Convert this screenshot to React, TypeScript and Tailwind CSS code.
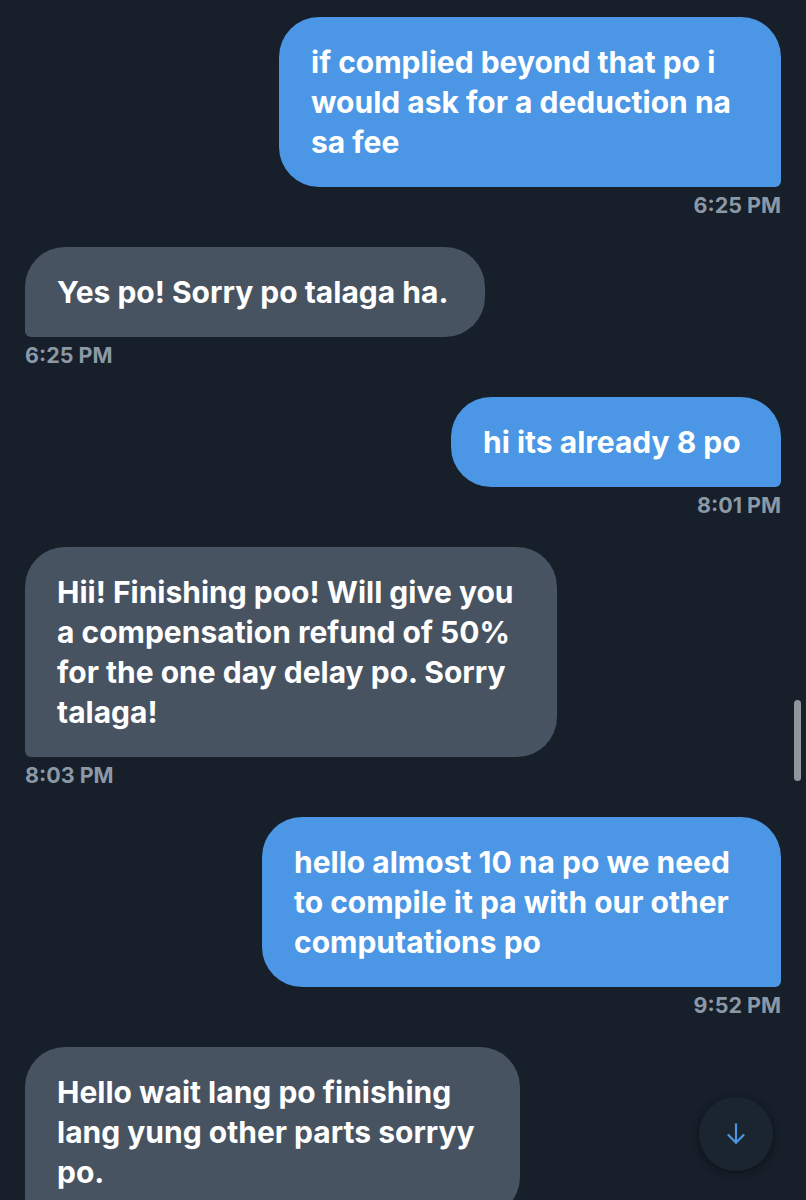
import React from "react";

type Msg = {
  mine: boolean;
  lines: string[];
  width: string;
  time?: string;
};

const messages: Msg[] = [
  {
    mine: true,
    lines: ["if complied beyond that po i", "would ask for a deduction na", "sa fee"],
    width: "w-[502px]",
    time: "6:25 PM",
  },
  { mine: false, lines: ["Yes po! Sorry po talaga ha."], width: "w-[460px]", time: "6:25 PM" },
  { mine: true, lines: ["hi its already 8 po"], width: "w-[330px]", time: "8:01 PM" },
  {
    mine: false,
    lines: [
      "Hii! Finishing poo! Will give you",
      "a compensation refund of 50%",
      "for the one day delay po. Sorry",
      "talaga!",
    ],
    width: "w-[532px]",
    time: "8:03 PM",
  },
  {
    mine: true,
    lines: ["hello almost 10 na po we need", "to compile it pa with our other", "computations po"],
    width: "w-[519px]",
    time: "9:52 PM",
  },
  {
    mine: false,
    lines: ["Hello wait lang po finishing", "lang yung other parts sorryy", "po."],
    width: "w-[495px]",
  },
];

const Bubble = ({ msg }: { msg: Msg }) => {
  return (
    <div className={`flex flex-col ${msg.mine ? "items-end" : "items-start"}`}>
      <div
        className={`${msg.width} rounded-[40px] py-[25px] pl-[32px] pr-3 text-[30px] leading-[40px] font-bold text-white ${
          msg.mine ? "bg-[#4b97e5] rounded-br-[6px]" : "bg-[#475361] rounded-bl-[6px]"
        }`}
      >
        {msg.lines.map((l, i) => (
          <div key={i} className="whitespace-nowrap">
            {l}
          </div>
        ))}
      </div>
      {msg.time && (
        <div className="mt-[6px] text-[21.5px] leading-[24px] font-bold text-[#8b98a5]">{msg.time}</div>
      )}
    </div>
  );
};

export default function App() {
  return (
    <div
      className="relative w-[806px] h-[1200px] overflow-hidden bg-[#161f2a]"
      style={{ fontFamily: "Inter, 'Noto Sans', sans-serif" }}
    >
      <div className="flex flex-col gap-[30px] pt-[17px] pl-[25px] pr-[25px]">
        {messages.map((m, i) => (
          <Bubble key={i} msg={m} />
        ))}
      </div>

      {/* scrollbar thumb */}
      <div className="absolute left-[794px] top-[700px] w-[7px] h-[81px] rounded-full bg-[#8f969e]" />

      {/* scroll to bottom */}
      <div className="absolute left-[699px] top-[1097px] w-[74px] h-[74px] rounded-full bg-[#1b2530] shadow-[0_2px_10px_rgba(0,0,0,0.45)] flex items-center justify-center">
        <svg width="26" height="26" viewBox="0 0 24 24" fill="none" stroke="#4b97e5" strokeWidth="2" strokeLinecap="round" strokeLinejoin="round">
          <path d="M12 3v17" />
          <path d="M5 13l7 7 7-7" />
        </svg>
      </div>
    </div>
  );
}
